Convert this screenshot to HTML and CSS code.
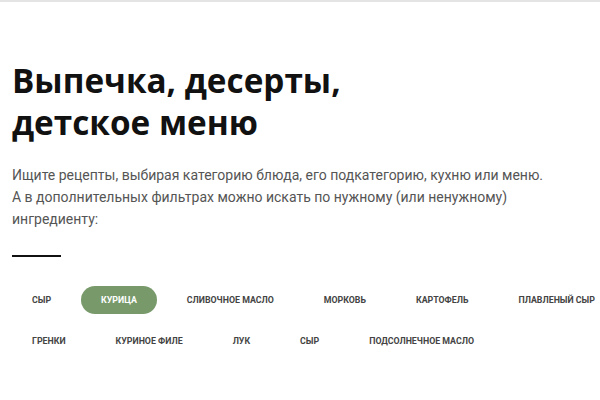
FILE: index.html
```html
<!DOCTYPE html>
<html lang="ru">
<head>
<meta charset="utf-8">
<link rel="stylesheet" href="styles.css">
</head>
<body>
<div class="topbar"></div>
<main class="page">
  <h1 class="title">Выпечка, десерты,<br>детское меню</h1>
  <p class="lead">Ищите рецепты, выбирая категорию блюда, его подкатегорию, кухню или меню.<br>А в дополнительных фильтрах можно искать по нужному (или ненужному)<br>ингредиенту:</p>
  <div class="rule"></div>
  <div class="tags">
    <div class="tag-row">
      <span class="tag">Сыр</span>
      <span class="tag tag-active">Курица</span>
      <span class="tag">Сливочное масло</span>
      <span class="tag">Морковь</span>
      <span class="tag">Картофель</span>
      <span class="tag">Плавленый сыр</span>
    </div>
    <div class="tag-row">
      <span class="tag">Гренки</span>
      <span class="tag">Куриное филе</span>
      <span class="tag">Лук</span>
      <span class="tag">Сыр</span>
      <span class="tag">Подсолнечное масло</span>
    </div>
  </div>
</main>
</body>
</html>
```
FILE: styles.css
```css
html, body {
  margin: 0;
  padding: 0;
  background: #ffffff;
  overflow: hidden;
}
body {
  width: 600px;
  height: 400px;
  font-family: Roboto, "Liberation Sans", sans-serif;
}
.topbar {
  height: 2px;
  background: #e4e4e4;
}
.page {
  padding: 0 12px;
}
.title {
  margin: 57px 0 0;
  font-family: "Open Sans", sans-serif;
  font-weight: 700;
  font-size: 33.3px;
  line-height: 42px;
  color: #111;
  letter-spacing: 0;
}
.lead {
  margin: 21px 0 0;
  font-size: 14px;
  line-height: 22px;
  color: #555;
}
.rule {
  width: 49px;
  height: 2px;
  background: #111;
  margin-top: 25px;
}
.tags {
  margin-top: 29px;
  display: flex;
  flex-direction: column;
  gap: 13px;
}
.tag-row {
  display: flex;
  gap: 10px;
  white-space: nowrap;
}
.tag {
  display: inline-flex;
  align-items: center;
  height: 28px;
  padding: 0 20px;
  border-radius: 14px;
  font-size: 8.8px;
  font-weight: 700;
  text-transform: uppercase;
  color: #444;
}
.tag-active {
  background: #789a6b;
  color: #fff;
}
```
